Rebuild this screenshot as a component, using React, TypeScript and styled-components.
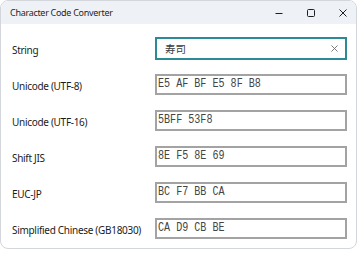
import React from "react";
import styled, { createGlobalStyle } from "styled-components";

type Row = {
  label: string;
  value: string;
};

const rows: Row[] = [
  { label: "Unicode (UTF-8)", value: "E5 AF BF E5 8F B8" },
  { label: "Unicode (UTF-16)", value: "5BFF 53F8" },
  { label: "Shift JIS", value: "8E F5 8E 69" },
  { label: "EUC-JP", value: "BC F7 BB CA" },
  { label: "Simplified Chinese (GB18030)", value: "CA D9 CB BE" },
];

const App: React.FC = () => (
  <>
    <GlobalStyle />
    <Window>
      <TitleBar>
        <Title>Character Code Converter</Title>
        <Controls>
          <CtrlButton aria-label="minimize">
            <svg width="10" height="10" viewBox="0 0 10 10">
              <path d="M1.5 5.5h7" stroke="#1f1f1f" strokeWidth="1" />
            </svg>
          </CtrlButton>
          <CtrlButton aria-label="maximize">
            <svg width="10" height="10" viewBox="0 0 10 10">
              <rect x="1.5" y="1.5" width="7" height="7" rx="1" fill="none" stroke="#1f1f1f" strokeWidth="1" />
            </svg>
          </CtrlButton>
          <CtrlButton aria-label="close">
            <svg width="10" height="10" viewBox="0 0 10 10">
              <path d="M1.5 1.5l7 7M8.5 1.5l-7 7" stroke="#1f1f1f" strokeWidth="1" />
            </svg>
          </CtrlButton>
        </Controls>
      </TitleBar>
      <Body>
        <Label>String</Label>
        <InputBox>
          <InputText>寿司</InputText>
          <ClearIcon viewBox="0 0 8 8">
            <path d="M0.5 0.5l7 7M7.5 0.5l-7 7" stroke="#6b6b6b" strokeWidth="1" />
          </ClearIcon>
        </InputBox>
        {rows.map((row) => (
          <React.Fragment key={row.label}>
            <Label>{row.label}</Label>
            <OutputBox>
              <Hex>{row.value}</Hex>
            </OutputBox>
          </React.Fragment>
        ))}
      </Body>
    </Window>
  </>
);

const GlobalStyle = createGlobalStyle`
  html, body {
    margin: 0;
    padding: 0;
    background: #ffffff;
  }
  body {
    font-family: "Noto Sans", "Open Sans", sans-serif;
  }
`;

const Window = styled("div")`
  width: 357px;
  height: 249px;
  box-sizing: border-box;
  border: 1px solid #d3d6da;
  border-radius: 8px;
  overflow: hidden;
  background: #ffffff;
  display: flex;
  flex-direction: column;
`;

const TitleBar = styled("div")`
  height: 23px;
  flex: none;
  background: #eef2f7;
  display: flex;
  align-items: center;
  justify-content: space-between;
  padding-left: 9px;
`;

const Title = styled("span")`
  font-size: 9px;
  letter-spacing: -0.3px;
  color: #1f1f1f;
  font-family: "Noto Sans", sans-serif;
`;

const Controls = styled("div")`
  display: flex;
  align-items: center;
  height: 100%;
  margin-right: -3px;
`;

const CtrlButton = styled("div")`
  width: 32px;
  height: 100%;
  display: flex;
  align-items: center;
  justify-content: center;
`;

const Body = styled("div")`
  flex: 1;
  display: grid;
  grid-template-columns: 143px 192px;
  grid-auto-rows: 36px;
  align-items: center;
  align-content: start;
  padding: 6px 0 0 11px;
`;

const Label = styled("span")`
  font-size: 10px;
  letter-spacing: -0.3px;
  color: #1b1b1b;
  padding-top: 3px;
  white-space: nowrap;
`;

const InputBox = styled("div")`
  height: 23px;
  box-sizing: border-box;
  border: 2px solid #2b8a95;
  display: flex;
  align-items: center;
  justify-content: space-between;
  padding: 0 7px 0 8px;
`;

const InputText = styled("span")`
  font-family: "Noto Sans CJK JP", "Noto Sans CJK SC", sans-serif;
  font-size: 10.5px;
  color: #3a3a3a;
`;

const ClearIcon = styled("svg")`
  width: 7px;
  height: 7px;
`;

const OutputBox = styled("div")`
  height: 21px;
  box-sizing: border-box;
  border: 2px solid #a3a3a3;
  display: flex;
  align-items: center;
  padding-left: 1px;
  overflow: hidden;
`;

const Hex = styled("span")`
  font-family: "Liberation Mono", monospace;
  font-size: 12px;
  color: #444444;
  white-space: pre;
  transform: scaleX(0.84);
  transform-origin: left center;
`;

export default App;
